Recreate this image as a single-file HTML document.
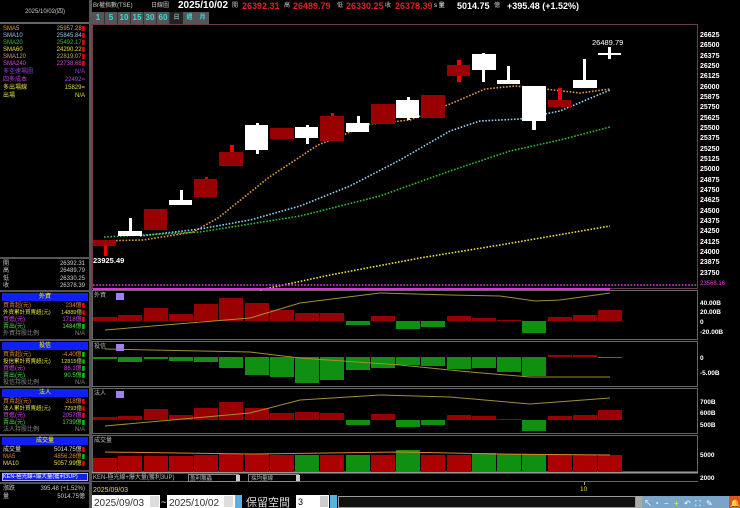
<!DOCTYPE html>
<html><head><meta charset="utf-8"><style>
*{margin:0;padding:0;box-sizing:border-box}
body{width:740px;height:508px;background:#000;overflow:hidden;position:relative;font-family:"Liberation Sans","Noto Sans CJK TC",sans-serif;font-size:7px;color:#ccc}
.a{position:absolute;white-space:nowrap;line-height:8px}
.r{position:absolute;left:3px;width:85px;height:8px;line-height:8px;white-space:nowrap;font-size:6px}
.r span{position:absolute;right:3px}
.s{font-size:5.5px}
.hd{position:absolute;left:2px;width:86px;height:8px;background:#1020f0;color:#ff0;text-align:center;line-height:8px;font-size:6px}
.sep{position:absolute;left:0;width:90px;height:2px;background:#555}
</style></head><body>
<div class="a" style="left:0;top:0;width:90px;height:24px;border-bottom:2px solid #666;text-align:center;line-height:24px;color:#ccc;font-size:6px">2025/10/02(四)</div>
<div style="position:absolute;left:89px;top:0;width:3px;height:508px;background:#555"></div>
<div class="r" style="top:25px;color:#e8a040">SMA5<span>25957.28<b style="color:#f00">▮</b></span></div>
<div class="r" style="top:32px;color:#8ec8f0">SMA10<span>25845.84<b style="color:#f00">▮</b></span></div>
<div class="r" style="top:39px;color:#30c030">SMA20<span>25492.17<b style="color:#f00">▮</b></span></div>
<div class="r" style="top:46px;color:#e8e040">SMA60<span>24290.22<b style="color:#f00">▮</b></span></div>
<div class="r" style="top:53px;color:#c8a070">SMA120<span>22819.07<b style="color:#f00">▮</b></span></div>
<div class="r" style="top:60px;color:#e040e0">SMA240<span>22738.68<b style="color:#f00">▮</b></span></div>
<div class="r" style="top:68px;color:#9040e0">多空速場圖<span>N/A</span></div>
<div class="r" style="top:76px;color:#c040e0">四多成本<span>22492=</span></div>
<div class="r" style="top:84px;color:#e0e040">多出場線<span>15829=</span></div>
<div class="r" style="top:92px;color:#e0e040">出場<span>N/A</span></div>
<div class="sep" style="top:257px"></div>
<div class="r" style="top:260px">開<span>26392.31</span></div>
<div class="r" style="top:267px">高<span>26489.79</span></div>
<div class="r" style="top:275px">低<span>26330.25</span></div>
<div class="r" style="top:282px">收<span>26378.39</span></div>
<div class="sep" style="top:290px"></div>
<div class="hd" style="top:293px">外資</div>
<div class="r" style="top:302px;color:#e08030">買賣超(元)<span>234億<b style="color:#f00">▮</b></span></div>
<div class="r s" style="top:309px;color:#e0e040">外資累計買賣超(元)<span>14889億<b style="color:#f00">▮</b></span></div>
<div class="r" style="top:316px;color:#d040e0">買進(元)<span>1718億<b style="color:#f00">▮</b></span></div>
<div class="r" style="top:323px;color:#40e040">賣出(元)<span>1484億<b style="color:#0c0">▮</b></span></div>
<div class="r" style="top:330px;color:#888">外資持股比例<span>N/A</span></div>
<div class="sep" style="top:339px"></div>
<div class="hd" style="top:342px">投信</div>
<div class="r" style="top:351px;color:#e08030">買賣超(元)<span>-4.40億<b style="color:#0c0">▮</b></span></div>
<div class="r s" style="top:358px;color:#e0e040">投信累計買賣超(元)<span>12815億<b style="color:#0c0">▮</b></span></div>
<div class="r" style="top:365px;color:#d040e0">買進(元)<span>86.1億<b style="color:#0c0">▮</b></span></div>
<div class="r" style="top:372px;color:#40e040">賣出(元)<span>90.5億<b style="color:#0c0">▮</b></span></div>
<div class="r" style="top:379px;color:#888">投信持股比例<span>N/A</span></div>
<div class="sep" style="top:386px"></div>
<div class="hd" style="top:389px">法人</div>
<div class="r" style="top:398px;color:#e08030">買賣超(元)<span>318億<b style="color:#f00">▮</b></span></div>
<div class="r s" style="top:405px;color:#e0e040">法人累計買賣超(元)<span>7293億<b style="color:#f00">▮</b></span></div>
<div class="r" style="top:412px;color:#d040e0">買進(元)<span>2057億<b style="color:#f00">▮</b></span></div>
<div class="r" style="top:419px;color:#40e040">賣出(元)<span>1739億<b style="color:#0c0">▮</b></span></div>
<div class="r" style="top:426px;color:#888">法人持股比例<span>N/A</span></div>
<div class="sep" style="top:434px"></div>
<div class="hd" style="top:437px">成交量</div>
<div class="r" style="top:446px;color:#ddd">成交量<span>5014.75億<b style="color:#f00">▮</b></span></div>
<div class="r" style="top:453px;color:#e08030">MA5<span>4856.26億<b style="color:#0c0">▮</b></span></div>
<div class="r" style="top:460px;color:#e0e040">MA10<span>5057.99億<b style="color:#f00">▮</b></span></div>
<div class="sep" style="top:470px"></div>
<div class="a" style="left:2px;top:473px;width:86px;height:8px;background:#1020f0;color:#fff;border:1px solid #aaf;line-height:6px;font-size:5.5px">KEN-極光線+爆大量(獲利3UP)</div>
<div class="sep" style="top:482px"></div>
<div class="r" style="top:485px">漲跌<span>395.48 (+1.52%)</span></div>
<div class="r" style="top:493px">量<span>5014.75億</span></div>

<div class="a" style="left:93px;top:2px;font-size:6px;color:#ccc">Br權指數(TSE)</div>
<div class="a" style="left:151px;top:2px;color:#ccc;font-size:6px">日線圖</div>
<div class="a" style="left:178px;top:1px;font-size:10px;font-weight:bold;color:#fff;line-height:10px">2025/10/02</div>
<div class="a" style="left:232px;top:2px;font-size:6px">開</div>
<div class="a" style="left:242px;top:1px;font-size:9px;font-weight:bold;color:#e02020;line-height:10px">26392.31</div>
<div class="a" style="left:284px;top:2px;font-size:6px">高</div>
<div class="a" style="left:293px;top:1px;font-size:9px;font-weight:bold;color:#e02020;line-height:10px">26489.79</div>
<div class="a" style="left:337px;top:2px;font-size:6px">低</div>
<div class="a" style="left:346px;top:1px;font-size:9px;font-weight:bold;color:#e02020;line-height:10px">26330.25</div>
<div class="a" style="left:385px;top:2px;font-size:6px">收</div>
<div class="a" style="left:395px;top:1px;font-size:9px;font-weight:bold;color:#e02020;line-height:10px">26378.39</div>
<div class="a" style="left:434px;top:2px;color:#fff;font-size:6px">s 量</div>
<div class="a" style="left:457px;top:1px;font-size:9px;font-weight:bold;color:#fff;line-height:10px">5014.75</div>
<div class="a" style="left:494px;top:2px;font-size:6px">億</div>
<div class="a" style="left:507px;top:1px;font-size:9px;font-weight:bold;color:#fff;line-height:10px">+395.48 (+1.52%)</div>
<div style="position:absolute;left:92px;top:12px;height:12px;display:flex;font-size:8px;font-weight:bold;color:#3dd">
<div style="width:13px;background:#555;text-align:center;line-height:12px;border-right:1px solid #333">1</div>
<div style="width:13px;background:#555;text-align:center;line-height:12px;border-right:1px solid #333">5</div>
<div style="width:13px;background:#555;text-align:center;line-height:12px;border-right:1px solid #333">10</div>
<div style="width:13px;background:#555;text-align:center;line-height:12px;border-right:1px solid #333">15</div>
<div style="width:13px;background:#555;text-align:center;line-height:12px;border-right:1px solid #333">30</div>
<div style="width:13px;background:#555;text-align:center;line-height:12px;border-right:1px solid #333">60</div>
<div style="width:13px;background:#222;text-align:center;line-height:12px;font-size:6px;color:#8aa">日</div>
<div style="width:13px;background:#555;text-align:center;line-height:12px;font-size:6px">週</div>
<div style="width:13px;background:#555;text-align:center;line-height:12px;font-size:6px">月</div>
</div>

<svg style="position:absolute;left:0;top:0" width="740" height="508" font-family="Liberation Sans, Noto Sans CJK TC, sans-serif">
<rect x="92.5" y="24.5" width="605" height="264" fill="none" stroke="#6a3a4a"/>
<g stroke="#666" fill="none">
<rect x="92.5" y="290.5" width="605" height="49"/>
<rect x="92.5" y="341.5" width="605" height="45"/>
<rect x="92.5" y="388.5" width="605" height="45"/>
<rect x="92.5" y="435.5" width="605" height="37"/>
<line x1="92" y1="481.5" x2="698" y2="481.5"/>
</g>
<line x1="92" y1="472.5" x2="698" y2="472.5" stroke="#999" stroke-width="2"/>
<g fill="none" stroke-width="1.6" stroke-dasharray="1.6 1.6">
<polyline stroke="#e39a3c" points="100,241 143,240 193,232 218,218 268,178 318,145 343,135 370,124 410,120 450,104 485,89 515,86 545,89 580,93 610,89"/>
<polyline stroke="#8ecff0" points="140,236 200,229 250,220 300,206 350,186 400,160 450,131 480,121 520,119 560,111 610,90"/>
<polyline stroke="#2fbf2f" points="104,237 200,232 300,216 380,196 450,171 510,151 560,140 610,127"/>
<polyline stroke="#e8e040" points="260,290 330,275 420,258 500,245 610,226"/>
<polyline stroke="#e040e0" points="93,285 698,285"/>
</g>
<line x1="93" y1="289" x2="610" y2="289" stroke="#e030e0" stroke-width="2"/>
<g>
<rect x="104" y="240" width="3" height="16" fill="#e00"/><rect x="93" y="240" width="23" height="6" fill="#900"/>
<rect x="129" y="218" width="3" height="18" fill="#fff"/><rect x="118" y="231" width="24" height="5" fill="#fff"/>
<rect x="144" y="209" width="23" height="21" fill="#900"/>
<rect x="180" y="190" width="3" height="15" fill="#fff"/><rect x="169" y="200" width="23" height="5" fill="#fff"/>
<rect x="205" y="177" width="3" height="4" fill="#e00"/><rect x="194" y="179" width="23" height="18" fill="#900"/>
<rect x="230" y="145" width="4" height="8" fill="#e00"/><rect x="219" y="152" width="24" height="14" fill="#900"/>
<rect x="256" y="123" width="3" height="31" fill="#fff"/><rect x="245" y="125" width="23" height="25" fill="#fff"/>
<rect x="270" y="128" width="24" height="11" fill="#900"/>
<rect x="306" y="125" width="3" height="19" fill="#fff"/><rect x="295" y="127" width="23" height="11" fill="#fff"/>
<rect x="331" y="113" width="3" height="4" fill="#e00"/><rect x="320" y="116" width="24" height="25" fill="#900"/>
<rect x="357" y="116" width="3" height="16" fill="#fff"/><rect x="346" y="123" width="23" height="9" fill="#fff"/>
<rect x="371" y="104" width="24" height="20" fill="#900"/>
<rect x="407" y="97" width="3" height="23" fill="#fff"/><rect x="396" y="100" width="23" height="18" fill="#fff"/>
<rect x="421" y="95" width="24" height="23" fill="#900"/>
<rect x="457" y="60" width="4" height="22" fill="#e00"/><rect x="447" y="65" width="23" height="11" fill="#900"/>
<rect x="482" y="53" width="3" height="29" fill="#fff"/><rect x="472" y="54" width="24" height="16" fill="#fff"/>
<rect x="507" y="66" width="3" height="18" fill="#fff"/><rect x="497" y="80" width="23" height="4" fill="#fff"/>
<rect x="532" y="86" width="4" height="44" fill="#fff"/><rect x="522" y="86" width="24" height="35" fill="#fff"/>
<rect x="558" y="88" width="4" height="12" fill="#e00"/><rect x="548" y="100" width="23" height="7" fill="#900"/>
<rect x="583" y="59" width="3" height="29" fill="#fff"/><rect x="573" y="80" width="24" height="8" fill="#fff"/>
<rect x="608" y="47" width="3" height="12" fill="#fff"/><rect x="598" y="53" width="23" height="2" fill="#fff"/>
</g>
<text x="93" y="263" font-size="7.5" font-weight="bold" fill="#fff">23925.49</text>
<text x="592" y="45" font-size="7.5" fill="#fff">26489.79</text>
<g font-size="7" fill="#fff" font-weight="bold">
<text x="700" y="37">26625</text><text x="700" y="47">26500</text><text x="700" y="58">26375</text><text x="700" y="68">26250</text><text x="700" y="78">26125</text><text x="700" y="89">26000</text><text x="700" y="99">25875</text><text x="700" y="109">25750</text><text x="700" y="120">25625</text><text x="700" y="130">25500</text><text x="700" y="140">25375</text><text x="700" y="151">25250</text><text x="700" y="161">25125</text><text x="700" y="171">25000</text><text x="700" y="182">24875</text><text x="700" y="192">24750</text><text x="700" y="202">24625</text><text x="700" y="213">24500</text><text x="700" y="223">24375</text><text x="700" y="233">24250</text><text x="700" y="244">24125</text><text x="700" y="254">24000</text><text x="700" y="264">23875</text><text x="700" y="275">23750</text>
</g>
<text x="700" y="285" font-size="6" fill="#e040e0">23568.16</text>
<g font-size="6" fill="#bbb"><text x="94" y="297">外資</text><text x="94" y="348">投信</text><text x="94" y="395">法人</text><text x="94" y="442">成交量</text></g>
<g fill="#a080f0"><rect x="116" y="293" width="8" height="7"/><rect x="116" y="344" width="8" height="7"/><rect x="116" y="391" width="8" height="7"/></g>
<g fill="#900">
<rect x="93" y="317" width="24" height="4"/><rect x="118" y="315" width="24" height="6"/><rect x="144" y="308" width="24" height="13"/><rect x="169" y="314" width="24" height="7"/><rect x="194" y="304" width="24" height="17"/><rect x="219" y="298" width="24" height="23"/><rect x="245" y="303" width="24" height="18"/><rect x="270" y="310" width="24" height="11"/><rect x="295" y="313" width="24" height="8"/><rect x="320" y="313" width="24" height="8"/><rect x="371" y="316" width="24" height="5"/><rect x="447" y="316" width="24" height="5"/><rect x="472" y="318" width="24" height="3"/><rect x="497" y="320" width="24" height="1"/><rect x="548" y="317" width="24" height="4"/><rect x="573" y="315" width="24" height="6"/><rect x="598" y="310" width="24" height="11"/>
</g>
<g fill="#109010">
<rect x="346" y="321" width="24" height="4"/><rect x="396" y="321" width="24" height="8"/><rect x="421" y="321" width="24" height="6"/><rect x="522" y="321" width="24" height="12"/>
</g>
<polyline fill="none" stroke="#a09030" stroke-width="1" points="105,330 250,318 300,303 380,293 450,295 500,296 535,301 560,300 610,293"/>
<g fill="#109010">
<rect x="93" y="357" width="24" height="2"/><rect x="118" y="357" width="24" height="5"/><rect x="144" y="357" width="24" height="2"/><rect x="169" y="357" width="24" height="4"/><rect x="194" y="357" width="24" height="5"/><rect x="219" y="357" width="24" height="11"/><rect x="245" y="357" width="24" height="18"/><rect x="270" y="357" width="24" height="20"/><rect x="295" y="357" width="24" height="26"/><rect x="320" y="357" width="24" height="23"/><rect x="346" y="357" width="24" height="13"/><rect x="371" y="357" width="24" height="11"/><rect x="396" y="357" width="24" height="8"/><rect x="421" y="357" width="24" height="9"/><rect x="447" y="357" width="24" height="12"/><rect x="472" y="357" width="24" height="11"/><rect x="497" y="357" width="24" height="15"/><rect x="522" y="357" width="24" height="19"/><rect x="598" y="357" width="24" height="1"/>
</g>
<g fill="#900"><rect x="548" y="355" width="24" height="2"/><rect x="573" y="355" width="24" height="2"/></g>
<polyline fill="none" stroke="#a09030" points="105,349 250,352 300,358 400,365 470,372 530,377 610,377"/>
<g fill="#900">
<rect x="93" y="417" width="24" height="3"/><rect x="118" y="416" width="24" height="4"/><rect x="144" y="409" width="24" height="11"/><rect x="169" y="415" width="24" height="5"/><rect x="194" y="408" width="24" height="12"/><rect x="219" y="402" width="24" height="18"/><rect x="245" y="408" width="24" height="12"/><rect x="270" y="413" width="24" height="7"/><rect x="295" y="412" width="24" height="8"/><rect x="320" y="413" width="24" height="7"/><rect x="371" y="414" width="24" height="6"/><rect x="447" y="415" width="24" height="5"/><rect x="472" y="416" width="24" height="4"/><rect x="497" y="419" width="24" height="1"/><rect x="548" y="416" width="24" height="4"/><rect x="573" y="415" width="24" height="5"/><rect x="598" y="410" width="24" height="10"/>
</g>
<g fill="#109010"><rect x="346" y="420" width="24" height="5"/><rect x="396" y="420" width="24" height="7"/><rect x="421" y="420" width="24" height="5"/><rect x="522" y="420" width="24" height="11"/></g>
<polyline fill="none" stroke="#a09030" points="105,426 250,413 300,400 380,395 450,397 530,404 610,398"/>
<g fill="#a00">
<rect x="93" y="458" width="24" height="14"/><rect x="118" y="456" width="24" height="16"/><rect x="144" y="456" width="24" height="16"/><rect x="169" y="456" width="24" height="16"/><rect x="194" y="455" width="24" height="17"/><rect x="219" y="454" width="24" height="18"/><rect x="245" y="454" width="24" height="18"/><rect x="270" y="455" width="24" height="17"/><rect x="320" y="455" width="24" height="17"/><rect x="371" y="455" width="24" height="17"/><rect x="421" y="455" width="24" height="17"/><rect x="447" y="455" width="24" height="17"/><rect x="548" y="455" width="24" height="17"/><rect x="573" y="455" width="24" height="17"/><rect x="598" y="455" width="24" height="17"/>
</g>
<g fill="#109010"><rect x="295" y="455" width="24" height="17"/><rect x="346" y="455" width="24" height="17"/><rect x="396" y="450" width="24" height="22"/><rect x="472" y="453" width="24" height="19"/><rect x="497" y="454" width="24" height="18"/><rect x="522" y="454" width="24" height="18"/></g>
<polyline fill="none" stroke="#e08030" points="105,452 250,454 400,452 500,454 610,455"/>
<g font-size="6.5" fill="#fff" font-weight="bold">
<text x="700" y="305">40.00B</text><text x="700" y="314">20.00B</text><text x="700" y="324">0</text><text x="700" y="334">-20.00B</text>
<text x="700" y="360">0</text><text x="700" y="375">-5.00B</text>
<text x="700" y="404">700B</text><text x="700" y="415">600B</text><text x="700" y="427">500B</text>
<text x="700" y="457">5000</text><text x="700" y="480">2000</text>
</g>
<text x="93" y="479" font-size="6" fill="#bbb">KEN-極光線+爆大量(獲利3UP)</text>
<rect x="188.5" y="474.5" width="50" height="7" fill="#000" stroke="#888"/><text x="190" y="480" font-size="5.5" fill="#bbb">盈利籌蟲</text>
<rect x="236" y="475" width="4" height="6" fill="#ccc"/>
<rect x="248.5" y="474.5" width="50" height="7" fill="#000" stroke="#888"/><text x="251" y="480" font-size="5.5" fill="#bbb">採均量線</text>
<rect x="296" y="475" width="4" height="6" fill="#ccc"/>
<text x="93" y="492" font-size="7" fill="#dd3">2025/09/03</text>
<line x1="584.5" y1="482" x2="584.5" y2="485" stroke="#aa8"/><text x="580" y="491" font-size="6.5" fill="#dd3">10</text>
<rect x="92" y="495" width="68" height="13" fill="#fff"/><text x="94" y="506" font-size="10" fill="#333">2025/09/03</text>
<rect x="150" y="496" width="9" height="11" fill="#ddd"/>
<text x="161" y="505" font-size="9" fill="#fff">~</text>
<rect x="167" y="495" width="68" height="13" fill="#fff"/><text x="169" y="506" font-size="10" fill="#333">2025/10/02</text>
<rect x="224" y="496" width="9" height="11" fill="#ddd"/>
<rect x="235" y="495" width="7" height="13" fill="#5ab0e0"/>
<text x="246" y="506" font-size="11" fill="#ddd">保留空間</text>
<rect x="296" y="495" width="33" height="13" fill="#fff"/><text x="298" y="505" font-size="9" fill="#000">3</text>
<rect x="320" y="496" width="8" height="11" fill="#ccc"/>
<rect x="330" y="495" width="7" height="13" fill="#5ab0e0"/>
<rect x="338.5" y="496.5" width="297" height="11" fill="#111" stroke="#999"/>
<rect x="636" y="496" width="6" height="12" fill="#aaa"/>
<rect x="642" y="496" width="98" height="12" fill="#7aa4c8"/>
<g fill="#fff" font-size="8"><text x="644" y="506">↖</text><text x="654" y="506">◔</text><text x="664" y="506">−</text><text x="674" y="506" fill="#ff0">+</text><text x="684" y="506">↶</text><text x="695" y="506">⛶</text><text x="706" y="506">✎</text></g>
<rect x="729" y="496" width="11" height="12" fill="#e05020"/><text x="730" y="506" font-size="8" fill="#fc0">🔔</text>
</svg>
</body></html>
